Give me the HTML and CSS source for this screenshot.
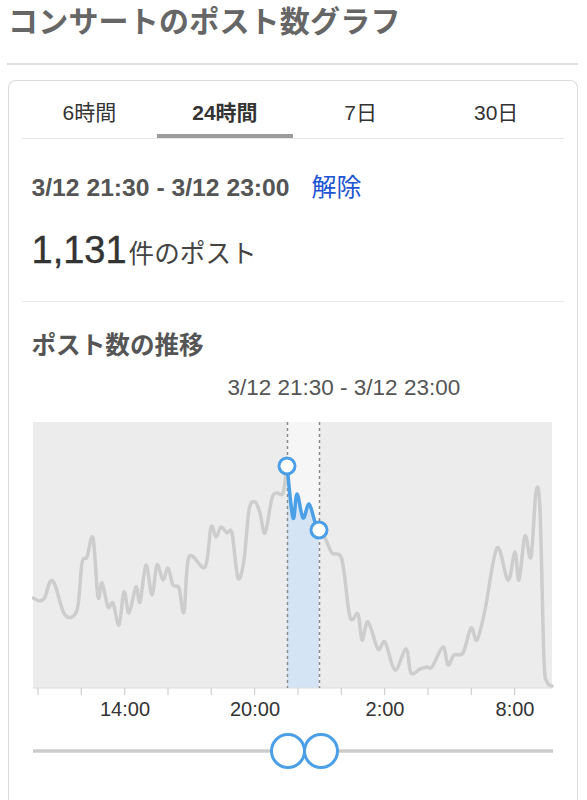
FILE: index.html
```html
<!DOCTYPE html>
<html lang="ja">
<head>
<meta charset="utf-8">
<title>コンサートのポスト数グラフ</title>
<link rel="stylesheet" href="styles.css">
</head>
<body>
<h1 class="title">コンサートのポスト数グラフ</h1>
<div class="rule"></div>
<div class="card">
  <div class="tabs">
    <div class="tab">6時間</div>
    <div class="tab active">24時間</div>
    <div class="tab">7日</div>
    <div class="tab">30日</div>
  </div>
  <div class="summary">
    <div class="range"><span class="range-text">3/12 21:30 - 3/12 23:00</span><a class="clear">解除</a></div>
    <div class="count"><span class="num">1,131</span><span class="unit">件のポスト</span></div>
  </div>
  <div class="trend">
    <h2 class="trend-title">ポスト数の推移</h2>
    <div class="chart-range">3/12 21:30 - 3/12 23:00</div>
    <svg class="chart" width="522" height="300" viewBox="32 422 522 300">
      <rect x="33" y="422" width="519" height="266" fill="#ececec"/>
      <rect x="287" y="422" width="33" height="266" fill="#f6f6f6"/>
      <path id="blueArea" fill="#d4e4f5" d=""/>
      <line x1="33" y1="688" x2="552" y2="688" stroke="#dcdcdc" stroke-width="1"/>
      <g id="ticks" stroke="#cfcfcf" stroke-width="1.2"></g>
      <line x1="287.5" y1="422" x2="287.5" y2="688" stroke="#8a8a8a" stroke-width="1.5" stroke-dasharray="3 3"/>
      <line x1="319.5" y1="422" x2="319.5" y2="688" stroke="#8a8a8a" stroke-width="1.5" stroke-dasharray="3 3"/>
      <path id="grayA" fill="none" stroke="#cdcdcd" stroke-width="3.5" stroke-linejoin="round" stroke-linecap="round" d=""/>
      <path id="grayB" fill="none" stroke="#cdcdcd" stroke-width="3.5" stroke-linejoin="round" stroke-linecap="round" d=""/>
      <path id="blueLine" fill="none" stroke="#4a9fe6" stroke-width="3.5" stroke-linejoin="round" stroke-linecap="round" d=""/>
      <circle cx="287" cy="466" r="8" fill="#fff" stroke="#4a9fe6" stroke-width="3"/>
      <circle cx="319" cy="530" r="8" fill="#fff" stroke="#4a9fe6" stroke-width="3"/>
      <g class="axis-labels">
        <text x="125" y="716">14:00</text>
        <text x="255" y="716">20:00</text>
        <text x="385" y="716">2:00</text>
        <text x="515" y="716">8:00</text>
      </g>
    </svg>
    <svg class="slider" width="522" height="44" viewBox="32 729 522 44">
      <line x1="33" y1="751" x2="553" y2="751" stroke="#cccccc" stroke-width="3.5"/>
      <circle cx="288" cy="751" r="16.5" fill="#fff" stroke="#4a9fe6" stroke-width="3"/>
      <circle cx="321" cy="751" r="16.5" fill="#fff" stroke="#4a9fe6" stroke-width="3"/>
    </svg>
  </div>
</div>
<script src="script.js"></script>
</body>
</html>
```
FILE: styles.css
```css
* { box-sizing: border-box; }
body {
  margin: 0;
  background: #fff;
  font-family: "Liberation Sans", "Noto Sans CJK JP", sans-serif;
  color: #333;
  width: 587px;
  overflow: hidden;
}
.title {
  margin: 0;
  padding: 6px 8px 0;
  font-size: 30px;
  line-height: 32px;
  font-weight: bold;
  color: #666;
  letter-spacing: 0.2px;
}
.rule {
  margin: 25px 9px 0 7px;
  height: 2px;
  background: #dedede;
}
.card {
  margin: 15px 0 0 8px;
  width: 570px;
  min-height: 760px;
  border: 1.5px solid #dcdcdc;
  border-bottom: none;
  border-radius: 8px 8px 0 0;
  padding: 0 13px 0 12.5px;
}
.tabs {
  display: grid;
  grid-template-columns: repeat(4, 1fr);
  border-bottom: 1.5px solid #e6e6e6;
}
.tab {
  text-align: center;
  font-size: 21px;
  line-height: 22px;
  padding: 21px 0 14px;
  color: #333;
}
.tab.active {
  font-weight: bold;
  box-shadow: inset 0 -4px 0 #9b9b9b;
}
.summary {
  padding: 0 0 25px 10px;
  border-bottom: 1.5px solid #e8e8e8;
}
.range {
  margin-top: 35px;
  line-height: 26px;
  display: flex;
  align-items: baseline;
  gap: 22px;
}
.range-text {
  font-size: 24.7px;
  font-weight: bold;
  color: #555;
}
.clear {
  font-size: 25px;
  color: #1f55d2;
}
.count {
  margin-top: 27px;
  line-height: 44px;
  display: flex;
  align-items: baseline;
}
.num {
  font-size: 38px;
  color: #333;
  -webkit-text-stroke: 0.4px #333;
}
.unit {
  font-size: 25.6px;
  color: #444;
  margin-left: 2px;
}
.trend {
  padding-left: 10px;
}
.trend-title {
  margin: 29px 0 0;
  font-size: 24.6px;
  line-height: 30px;
  font-weight: bold;
  color: #555;
}
.chart-range {
  margin-top: 14px;
  padding-left: 196px;
  font-size: 22.5px;
  line-height: 26px;
  color: #555;
}
.chart {
  display: block;
  margin-top: 21px;
}
.axis-labels text {
  font-family: "Liberation Sans", sans-serif;
  font-size: 20px;
  fill: #333;
  text-anchor: middle;
}
.slider {
  display: block;
  margin-top: 7px;
}
```
FILE: script.js
```js
(function () {
  var grayA = [[33,598],[40,601],[45,597],[50,582],[55,585],[65,615],[77,610],[82,563],[87,557],[93,538],[98,597],[102,583],[108,607],[113,603],[119,625],[124,592],[129,613],[136,587],[140,602],[146,565],[152,595],[157,565],[163,580],[168,568],[173,585],[179,588],[184,612],[189,557],[205,567],[211,527],[216,537],[221,527],[227,533],[232,533],[238,578],[244,560],[249,510],[255,502],[260,513],[265,533],[272,498],[277,493],[283,493],[287,466]];
  var blue = [[287,466],[293,518],[297,494],[303,518],[309,504],[315,522],[319,530]];
  var grayB = [[319,530],[325,538],[332,553],[342,560],[350,617],[358,614],[362,640],[368,622],[378,649],[385,642],[395,670],[406,649],[411,673],[420,669],[427,667],[432,667],[443,647],[448,665],[454,655],[463,653],[471,628],[477,640],[485,610],[497,548],[508,580],[515,552],[519,580],[525,536],[531,557],[536,492],[540,510],[544,660],[547,682],[552,686]];
  function smooth(p) {
    var d = "M" + p[0][0] + "," + p[0][1];
    for (var i = 0; i < p.length - 1; i++) {
      var p0 = p[i - 1] || p[i], p1 = p[i], p2 = p[i + 1], p3 = p[i + 2] || p2;
      var t = 6;
      var c1x = p1[0] + (p2[0] - p0[0]) / t, c1y = p1[1] + (p2[1] - p0[1]) / t;
      var c2x = p2[0] - (p3[0] - p1[0]) / t, c2y = p2[1] - (p3[1] - p1[1]) / t;
      c1y = Math.min(c1y, 686); c2y = Math.min(c2y, 686);
      d += " C" + c1x.toFixed(1) + "," + c1y.toFixed(1) + " " + c2x.toFixed(1) + "," + c2y.toFixed(1) + " " + p2[0] + "," + p2[1];
    }
    return d;
  }
  document.getElementById("grayA").setAttribute("d", smooth(grayA));
  document.getElementById("grayB").setAttribute("d", smooth(grayB));
  var bd = smooth(blue);
  document.getElementById("blueLine").setAttribute("d", bd);
  document.getElementById("blueArea").setAttribute("d", bd + " L319,688 L287,688 Z");
  var ticks = document.getElementById("ticks");
  for (var k = 0; k < 12; k++) {
    var x = 38 + k * 43.33;
    var l = document.createElementNS("http://www.w3.org/2000/svg", "line");
    l.setAttribute("x1", x.toFixed(1)); l.setAttribute("x2", x.toFixed(1));
    l.setAttribute("y1", "688"); l.setAttribute("y2", "695");
    ticks.appendChild(l);
  }
})();
```
